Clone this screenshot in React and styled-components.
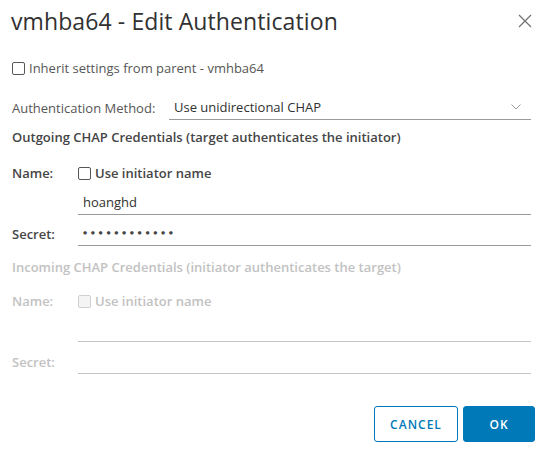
import styled, { createGlobalStyle } from "styled-components";

const GlobalStyle = createGlobalStyle`
  html, body {
    margin: 0;
    padding: 0;
    background: #ffffff;
  }
  body {
    font-family: "Open Sans", Lato, sans-serif;
  }
`;

const Dialog = styled.div`
  width: 551px;
  height: 452px;
  box-sizing: border-box;
  background: #fff;
  display: flex;
  flex-direction: column;
  color: #565656;
`;

const Header = styled.div`
  height: 42px;
  padding: 0 17px 0 11px;
  display: flex;
  align-items: center;
  justify-content: space-between;
`;

const Title = styled.h3`
  margin: 0;
  font-family: "Open Sans", sans-serif;
  font-weight: 400;
  font-size: 23px;
  letter-spacing: 0.1px;
  color: #313131;
`;

const CloseButton = styled.button`
  border: 0;
  background: none;
  padding: 0;
  width: 18px;
  height: 18px;
  display: flex;
  align-items: center;
  justify-content: center;
  cursor: pointer;
`;

const Body = styled.div`
  flex: 1;
  padding: 0 20px 0 12px;
  display: flex;
  flex-direction: column;
  font-size: 13px;
  line-height: 18px;
`;

const CheckRow = styled.label`
  display: flex;
  align-items: center;
  gap: 4px;
  height: 20px;
  margin-top: ${(p) => p.$top || 0}px;
  color: ${(p) => (p.$disabled ? "#c2c2c2" : p.$bold ? "#454545" : "#565656")};
  font-weight: ${(p) => (p.$bold ? 600 : 400)};
`;

const Box = styled.span`
  width: 11px;
  height: 11px;
  border: 1px solid ${(p) => (p.$disabled ? "#cfcfcf" : "#565656")};
  border-radius: 2px;
  background: ${(p) => (p.$disabled ? "#f4f4f4" : "#fff")};
  flex-shrink: 0;
`;

const FieldRow = styled.div`
  display: grid;
  grid-template-columns: ${(p) => p.$label || 66}px 1fr;
  align-items: center;
  margin-top: ${(p) => p.$top || 0}px;
`;

const Label = styled.span`
  font-weight: ${(p) => (p.$bold ? 600 : 400)};
  color: ${(p) => (p.$disabled ? "#c2c2c2" : p.$bold ? "#454545" : "#565656")};
`;

const Field = styled.div`
  height: 24px;
  display: flex;
  align-items: center;
  justify-content: space-between;
  padding: 0 10px 0 5px;
  border-bottom: 1px solid ${(p) => (p.$disabled ? "#c4c4c4" : "#9a9a9a")};
  color: #313131;
`;

const Dots = styled.span`
  letter-spacing: 3.6px;
  font-size: 7px;
  color: #454545;
`;

const Heading = styled.div`
  margin-top: ${(p) => p.$top || 0}px;
  font-weight: 600;
  color: ${(p) => (p.$disabled ? "#c2c2c2" : "#454545")};
`;

const Footer = styled.div`
  display: flex;
  justify-content: flex-end;
  gap: 5px;
  padding: 0 16px 10px 0;
`;

const Button = styled.button`
  height: 36px;
  min-width: ${(p) => p.$width}px;
  border-radius: 3px;
  border: 1px solid #0079b8;
  background: ${(p) => (p.$primary ? "#0079b8" : "#fff")};
  color: ${(p) => (p.$primary ? "#fff" : "#0079b8")};
  font-family: "Open Sans", sans-serif;
  font-weight: 600;
  font-size: 12px;
  letter-spacing: 1px;
  cursor: pointer;
`;

function Chevron() {
  return (
    <svg width="10" height="6" viewBox="0 0 10 6" fill="none">
      <path d="M0.5 0.5 L5 5 L9.5 0.5" stroke="#9a9a9a" strokeWidth="1" />
    </svg>
  );
}

function CloseIcon() {
  return (
    <svg width="14" height="14" viewBox="0 0 14 14">
      <path d="M1 1 L13 13 M13 1 L1 13" stroke="#747474" strokeWidth="1.3" />
    </svg>
  );
}

export default function App() {
  return (
    <>
      <GlobalStyle />
      <Dialog>
        <Header>
          <Title>vmhba64 - Edit Authentication</Title>
          <CloseButton aria-label="Close">
            <CloseIcon />
          </CloseButton>
        </Header>
        <Body>
          <CheckRow $top={16}>
            <Box />
            Inherit settings from parent - vmhba64
          </CheckRow>

          <FieldRow $label={157} $top={17}>
            <Label>Authentication Method:</Label>
            <Field>
              Use unidirectional CHAP
              <Chevron />
            </Field>
          </FieldRow>

          <Heading $top={8}>
            Outgoing CHAP Credentials (target authenticates the initiator)
          </Heading>

          <FieldRow $top={17}>
            <Label $bold>Name:</Label>
            <CheckRow $bold>
              <Box />
              Use initiator name
            </CheckRow>
          </FieldRow>

          <FieldRow $top={7}>
            <span />
            <Field>hoanghd</Field>
          </FieldRow>

          <FieldRow $top={6}>
            <Label $bold>Secret:</Label>
            <Field>
              <Dots>●●●●●●●●●●●●</Dots>
            </Field>
          </FieldRow>

          <Heading $top={12} $disabled>
            Incoming CHAP Credentials (initiator authenticates the target)
          </Heading>

          <FieldRow $top={15}>
            <Label $bold $disabled>
              Name:
            </Label>
            <CheckRow $bold $disabled>
              <Box $disabled />
              Use initiator name
            </CheckRow>
          </FieldRow>

          <FieldRow $top={6}>
            <span />
            <Field $disabled />
          </FieldRow>

          <FieldRow $top={7}>
            <Label $bold $disabled>
              Secret:
            </Label>
            <Field $disabled />
          </FieldRow>
        </Body>
        <Footer>
          <Button $width={84}>CANCEL</Button>
          <Button $width={72} $primary>
            OK
          </Button>
        </Footer>
      </Dialog>
    </>
  );
}
